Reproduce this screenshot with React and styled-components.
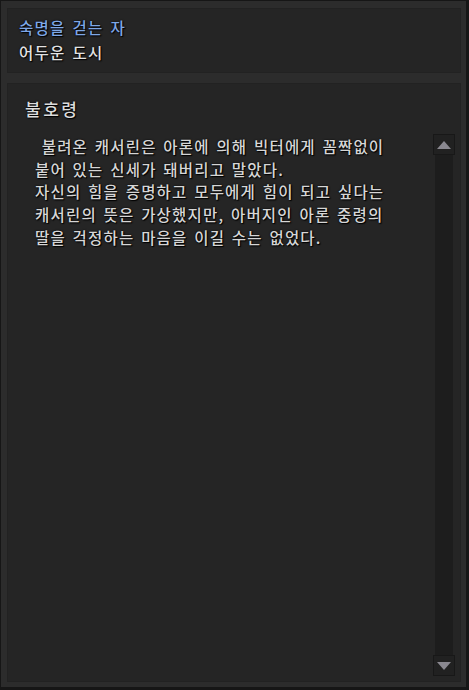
import React from "react";
import styled, { createGlobalStyle } from "styled-components";

const Global = createGlobalStyle`
  html, body { margin: 0; padding: 0; background: #141414; }
  #root { width: 469px; height: 690px; }
  * { box-sizing: border-box; }
`;

const Frame = styled.div`
  width: 469px;
  height: 690px;
  background: #2c2c2c;
  border: 1px solid #161616;
  border-right-width: 3px;
  border-bottom-width: 3px;
  padding: 7px 5px 5px 6px;
  display: flex;
  flex-direction: column;
  gap: 10px;
  font-family: "Noto Sans CJK KR", "Noto Sans", sans-serif;
`;

const Panel = styled.div`
  background: #252525;
  border: 1px solid #222;
  display: flex;
  flex-direction: column;
`;

const Header = styled(Panel)`
  height: 65px;
  padding: 8px 11px 10px;
  justify-content: center;
  gap: 2px;
`;

const Name = styled.div`
  color: ${(p) => p.$color};
  font-size: 15.5px;
  font-weight: 500;
  line-height: 23px;
  letter-spacing: 1.3px;
  word-spacing: 2px;
  text-shadow: 0 0 2px #000, 1px 1px 1px #000;
`;

const Body = styled(Panel)`
  flex: 1;
  padding: 13px 5px 5px 17px;
  flex-direction: row;
`;

const Content = styled.div`
  flex: 1;
  display: flex;
  flex-direction: column;
`;

const Title = styled.div`
  color: #dcdcdc;
  font-size: 17px;
  font-weight: 500;
  line-height: 24px;
  letter-spacing: 2.5px;
  text-shadow: 0 0 2px #000, 1px 1px 1px #000;
  margin-bottom: 14px;
`;

const Text = styled.div`
  color: #d6d6d6;
  font-size: 15.5px;
  font-weight: 500;
  line-height: 22.7px;
  padding-left: 10px;
  white-space: pre;
  text-shadow: 0 0 2px #000, 1px 1px 1px #000;
  letter-spacing: 1.2px;
  word-spacing: 2px;
`;

const Scroll = styled.div`
  width: 22px;
  margin-top: 37px;
  display: flex;
  flex-direction: column;
  align-items: center;
`;

const Track = styled.div`
  flex: 1;
  width: 18px;
  background: #1d1d1d;
`;

const Btn = styled.div`
  width: 22px;
  height: 21px;
  background: #212121;
  border: 1px solid #181818;
  display: flex;
  align-items: center;
  justify-content: center;
`;

const Arrow = ({ down }) => (
  <svg width="16" height="10" viewBox="0 0 16 10">
    <polygon
      points={down ? "1,1 15,1 8,9" : "1,9 15,9 8,1"}
      fill="#8a8890"
    />
  </svg>
);

const body = ` 불려온 캐서린은 아론에 의해 빅터에게 꼼짝없이
붙어 있는 신세가 돼버리고 말았다.
자신의 힘을 증명하고 모두에게 힘이 되고 싶다는
캐서린의 뜻은 가상했지만, 아버지인 아론 중령의
딸을 걱정하는 마음을 이길 수는 없었다.`;

export default function App() {
  return (
    <>
      <Global />
      <Frame>
        <Header>
          <Name $color="#7ea7e6">숙명을 걷는 자</Name>
          <Name $color="#e2e2e2">어두운 도시</Name>
        </Header>
        <Body>
          <Content>
            <Title>불호령</Title>
            <Text>{body}</Text>
          </Content>
          <Scroll>
            <Btn><Arrow /></Btn>
            <Track />
            <Btn><Arrow down /></Btn>
          </Scroll>
        </Body>
      </Frame>
    </>
  );
}
